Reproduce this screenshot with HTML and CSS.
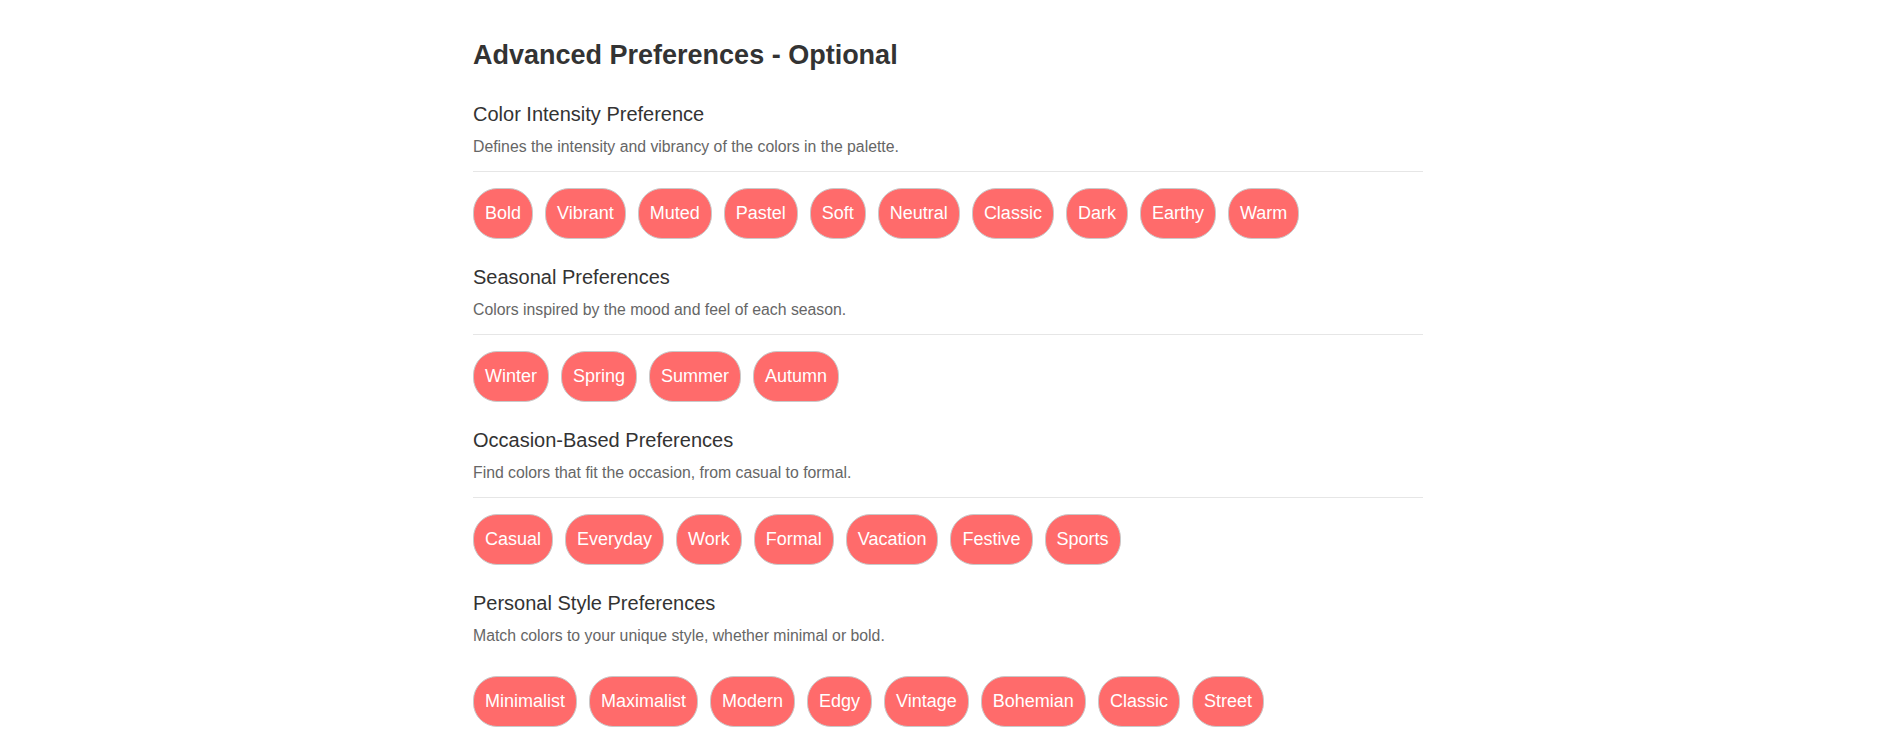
FILE: index.html
```html
<!DOCTYPE html>
<html lang="en">
<head>
<meta charset="utf-8">
<title>Advanced Preferences</title>
<link rel="stylesheet" href="styles.css">
</head>
<body>
<div class="container">
  <h2 class="title">Advanced Preferences - Optional</h2>

  <section class="group">
    <h3 class="group-title">Color Intensity Preference</h3>
    <p class="group-desc">Defines the intensity and vibrancy of the colors in the palette.</p>
    <div class="options">
      <button class="chip">Bold</button>
      <button class="chip">Vibrant</button>
      <button class="chip">Muted</button>
      <button class="chip">Pastel</button>
      <button class="chip">Soft</button>
      <button class="chip">Neutral</button>
      <button class="chip">Classic</button>
      <button class="chip">Dark</button>
      <button class="chip">Earthy</button>
      <button class="chip">Warm</button>
    </div>
  </section>

  <section class="group">
    <h3 class="group-title">Seasonal Preferences</h3>
    <p class="group-desc">Colors inspired by the mood and feel of each season.</p>
    <div class="options">
      <button class="chip">Winter</button>
      <button class="chip">Spring</button>
      <button class="chip">Summer</button>
      <button class="chip">Autumn</button>
    </div>
  </section>

  <section class="group">
    <h3 class="group-title">Occasion-Based Preferences</h3>
    <p class="group-desc">Find colors that fit the occasion, from casual to formal.</p>
    <div class="options">
      <button class="chip">Casual</button>
      <button class="chip">Everyday</button>
      <button class="chip">Work</button>
      <button class="chip">Formal</button>
      <button class="chip">Vacation</button>
      <button class="chip">Festive</button>
      <button class="chip">Sports</button>
    </div>
  </section>

  <section class="group group-last">
    <h3 class="group-title">Personal Style Preferences</h3>
    <p class="group-desc">Match colors to your unique style, whether minimal or bold.</p>
    <div class="options">
      <button class="chip">Minimalist</button>
      <button class="chip">Maximalist</button>
      <button class="chip">Modern</button>
      <button class="chip">Edgy</button>
      <button class="chip">Vintage</button>
      <button class="chip">Bohemian</button>
      <button class="chip">Classic</button>
      <button class="chip">Street</button>
    </div>
  </section>
</div>
</body>
</html>
```

FILE: styles.css
```css
html, body {
  margin: 0;
  background: #ffffff;
}

body {
  padding: 0 0 0 7px;
  font-family: "Liberation Sans", Arial, sans-serif;
  color: #333333;
}

.container {
  width: 950px;
  margin: 0 auto;
  padding-top: 39px;
}

.title {
  margin: 0 0 31px 0;
  font-size: 27px;
  line-height: 32px;
  font-weight: 700;
  color: #333333;
}

.group {
  margin-bottom: 26px;
}

.group-title {
  margin: 0 0 11px 0;
  font-size: 20px;
  line-height: 24px;
  font-weight: 400;
  color: #333333;
}

.group-desc {
  margin: 0 0 16px 0;
  padding-bottom: 14px;
  font-size: 15.8px;
  line-height: 20px;
  color: #666666;
  border-bottom: 1px solid #e6e6e6;
}

.group-last .group-desc {
  border-bottom: none;
}

.options {
  display: flex;
  flex-wrap: wrap;
  gap: 12px;
}

.chip {
  font-family: "Liberation Sans", Arial, sans-serif;
  font-size: 18px;
  line-height: 27px;
  padding: 11px;
  color: #ffffff;
  background: #ff6b6b;
  border: 1px solid #c9c9c9;
  border-radius: 24px;
  cursor: pointer;
}
```
